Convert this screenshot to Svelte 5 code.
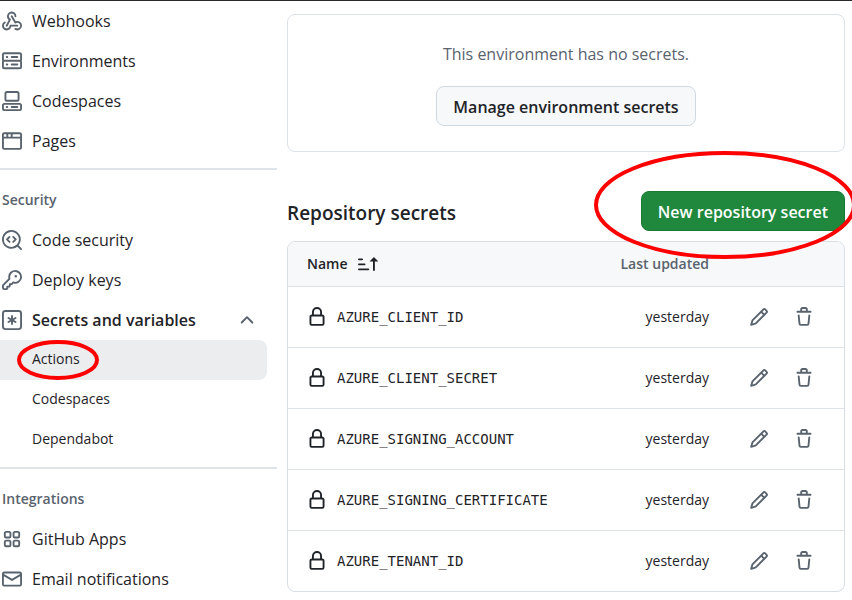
<script>
  const icons = {
    webhook: 'M5.5 4.25a2.25 2.25 0 0 1 4.5 0 .75.75 0 0 0 1.5 0 3.75 3.75 0 1 0-6.14 2.889l-2.272 4.258a.75.75 0 0 0 1.324.706L7 7.25a.75.75 0 0 0-.309-1.015A2.25 2.25 0 0 1 5.5 4.25Z M7.364 3.607a.75.75 0 0 1 1.03.257l2.608 4.349a3.75 3.75 0 1 1-.628 6.785.75.75 0 0 1 .752-1.299 2.25 2.25 0 1 0-.033-3.88.75.75 0 0 1-1.03-.256L7.107 4.636a.75.75 0 0 1 .257-1.03Z M2.9 8.776A.75.75 0 0 1 2.625 9.8 2.25 2.25 0 1 0 6 11.75a.75.75 0 0 1 .75-.751h5.5a.75.75 0 0 1 0 1.5H7.425a3.751 3.751 0 1 1-5.55-3.998.75.75 0 0 1 1.024.274Z',
    server: 'M1.75 1h12.5c.966 0 1.75.784 1.75 1.75v4c0 .372-.116.717-.314 1 .198.283.314.628.314 1v4a1.75 1.75 0 0 1-1.75 1.75H1.75A1.75 1.75 0 0 1 0 12.75v-4c0-.358.109-.707.314-1a1.739 1.739 0 0 1-.314-1v-4C0 1.784.784 1 1.75 1ZM1.5 2.75v4c0 .138.112.25.25.25h12.5a.25.25 0 0 0 .25-.25v-4a.25.25 0 0 0-.25-.25H1.75a.25.25 0 0 0-.25.25Zm.25 5.75a.25.25 0 0 0-.25.25v4c0 .138.112.25.25.25h12.5a.25.25 0 0 0 .25-.25v-4a.25.25 0 0 0-.25-.25ZM7 4.75A.75.75 0 0 1 7.75 4h4.5a.75.75 0 0 1 0 1.5h-4.5A.75.75 0 0 1 7 4.75ZM7.75 10h4.5a.75.75 0 0 1 0 1.5h-4.5a.75.75 0 0 1 0-1.5ZM3 4.75A.75.75 0 0 1 3.75 4h.5a.75.75 0 0 1 0 1.5h-.5A.75.75 0 0 1 3 4.75ZM3.75 10h.5a.75.75 0 0 1 0 1.5h-.5a.75.75 0 0 1 0-1.5Z',
    codespaces: 'M0 11.25c0-.966.784-1.75 1.75-1.75h12.5c.966 0 1.75.784 1.75 1.75v3A1.75 1.75 0 0 1 14.25 16H1.75A1.75 1.75 0 0 1 0 14.25Zm2-9.5C2 .784 2.784 0 3.75 0h8.5C13.216 0 14 .784 14 1.75v5a1.75 1.75 0 0 1-1.75 1.75h-8.5A1.75 1.75 0 0 1 2 6.75Zm1.75-.25a.25.25 0 0 0-.25.25v5c0 .138.112.25.25.25h8.5a.25.25 0 0 0 .25-.25v-5a.25.25 0 0 0-.25-.25Zm-2 9.5a.25.25 0 0 0-.25.25v3c0 .138.112.25.25.25h12.5a.25.25 0 0 0 .25-.25v-3a.25.25 0 0 0-.25-.25Z M7 12.75a.75.75 0 0 1 .75-.75h4.5a.75.75 0 0 1 0 1.5h-4.5a.75.75 0 0 1-.75-.75Zm-4 0a.75.75 0 0 1 .75-.75h.5a.75.75 0 0 1 0 1.5h-.5a.75.75 0 0 1-.75-.75Z',
    browser: 'M0 2.75C0 1.784.784 1 1.75 1h12.5c.966 0 1.75.784 1.75 1.75v10.5A1.75 1.75 0 0 1 14.25 15H1.75A1.75 1.75 0 0 1 0 13.25ZM14.5 6h-13v7.25c0 .138.112.25.25.25h12.5a.25.25 0 0 0 .25-.25Zm-6-3.5v2h6V2.75a.25.25 0 0 0-.25-.25ZM5 2.5v2h2v-2Zm-3.25 0a.25.25 0 0 0-.25.25V4.5h2v-2Z',
    codescan: 'M8.47 4.97a.75.75 0 0 0 0 1.06L9.94 7.5 8.47 8.97a.75.75 0 1 0 1.06 1.06l2-2a.75.75 0 0 0 0-1.06l-2-2a.75.75 0 0 0-1.06 0ZM6.53 6.03a.75.75 0 0 0-1.06-1.06l-2 2a.75.75 0 0 0 0 1.06l2 2a.75.75 0 1 0 1.06-1.06L5.06 7.5l1.47-1.47Z M12.246 13.307a7.501 7.501 0 1 1 1.06-1.06l2.474 2.473a.749.749 0 0 1-.326 1.275.749.749 0 0 1-.734-.215ZM1.5 7.5a6.002 6.002 0 0 0 3.608 5.504 6.002 6.002 0 0 0 6.486-1.117.748.748 0 0 1 .292-.293A6 6 0 1 0 1.5 7.5Z',
    key: 'M10.5 0a5.499 5.499 0 1 1-1.288 10.848l-.932.932a.749.749 0 0 1-.53.22H7v.75a.749.749 0 0 1-.22.53l-.5.5a.749.749 0 0 1-.53.22H5v.75a.749.749 0 0 1-.22.53l-.5.5a.749.749 0 0 1-.53.22h-2A1.75 1.75 0 0 1 0 14.25v-2c0-.199.079-.389.22-.53l4.932-4.932A5.5 5.5 0 0 1 10.5 0Zm-4 5.5c-.001.431.069.86.205 1.269a.75.75 0 0 1-.181.768L1.5 12.56v1.69c0 .138.112.25.25.25h1.69l.06-.06v-1.19a.75.75 0 0 1 .75-.75h1.19l.06-.06v-1.19a.75.75 0 0 1 .75-.75h1.19l1.023-1.025a.75.75 0 0 1 .768-.18A4 4 0 1 0 6.5 5.5ZM11 6a1 1 0 1 1 0-2 1 1 0 0 1 0 2Z',
    asterisk: 'M0 2.75A2.75 2.75 0 0 1 2.75 0h10.5A2.75 2.75 0 0 1 16 2.75v10.5A2.75 2.75 0 0 1 13.25 16H2.75A2.75 2.75 0 0 1 0 13.25ZM2.75 1.5c-.69 0-1.25.56-1.25 1.25v10.5c0 .69.56 1.25 1.25 1.25h10.5c.69 0 1.25-.56 1.25-1.25V2.75c0-.69-.56-1.25-1.25-1.25Z M8 4a.75.75 0 0 1 .75.75V6.7l1.69-.975a.75.75 0 0 1 .75 1.3L9.5 8l1.69.976a.75.75 0 0 1-.75 1.298L8.75 9.3v1.951a.75.75 0 0 1-1.5 0V9.299l-1.69.976a.75.75 0 0 1-.75-1.3L6.5 8l-1.69-.975a.75.75 0 0 1 .75-1.3l1.69.976V4.75A.75.75 0 0 1 8 4Z',
    apps: 'M1.5 3.25c0-.966.784-1.75 1.75-1.75h2.5c.966 0 1.75.784 1.75 1.75v2.5A1.75 1.75 0 0 1 5.75 7.5h-2.5A1.75 1.75 0 0 1 1.5 5.75Zm7 0c0-.966.784-1.75 1.75-1.75h2.5c.966 0 1.75.784 1.75 1.75v2.5a1.75 1.75 0 0 1-1.75 1.75h-2.5A1.75 1.75 0 0 1 8.5 5.75Zm-7 7c0-.966.784-1.75 1.75-1.75h2.5c.966 0 1.75.784 1.75 1.75v2.5a1.75 1.75 0 0 1-1.75 1.75h-2.5a1.75 1.75 0 0 1-1.75-1.75Zm7 0c0-.966.784-1.75 1.75-1.75h2.5c.966 0 1.75.784 1.75 1.75v2.5a1.75 1.75 0 0 1-1.75 1.75h-2.5a1.75 1.75 0 0 1-1.75-1.75ZM3.25 3a.25.25 0 0 0-.25.25v2.5c0 .138.112.25.25.25h2.5A.25.25 0 0 0 6 5.75v-2.5A.25.25 0 0 0 5.75 3Zm7 0a.25.25 0 0 0-.25.25v2.5c0 .138.112.25.25.25h2.5a.25.25 0 0 0 .25-.25v-2.5a.25.25 0 0 0-.25-.25Zm-7 7a.25.25 0 0 0-.25.25v2.5c0 .138.112.25.25.25h2.5a.25.25 0 0 0 .25-.25v-2.5a.25.25 0 0 0-.25-.25Zm7 0a.25.25 0 0 0-.25.25v2.5c0 .138.112.25.25.25h2.5a.25.25 0 0 0 .25-.25v-2.5a.25.25 0 0 0-.25-.25Z',
    mail: 'M1.75 2h12.5c.966 0 1.75.784 1.75 1.75v8.5A1.75 1.75 0 0 1 14.25 14H1.75A1.75 1.75 0 0 1 0 12.25v-8.5C0 2.784.784 2 1.75 2ZM1.5 12.251c0 .138.112.25.25.25h12.5a.25.25 0 0 0 .25-.25V5.809L8.38 9.397a.75.75 0 0 1-.76 0L1.5 5.809v6.442Zm13-8.181v-.32a.25.25 0 0 0-.25-.25H1.75a.25.25 0 0 0-.25.25v.32L8 7.88Z',
    lock: 'M4 4a4 4 0 0 1 8 0v2h.25c.966 0 1.75.784 1.75 1.75v5.5A1.75 1.75 0 0 1 12.25 15h-8.5A1.75 1.75 0 0 1 2 13.25v-5.5C2 6.784 2.784 6 3.75 6H4Zm8.25 3.5h-8.5a.25.25 0 0 0-.25.25v5.5c0 .138.112.25.25.25h8.5a.25.25 0 0 0 .25-.25v-5.5a.25.25 0 0 0-.25-.25ZM10.5 6V4a2.5 2.5 0 1 0-5 0v2Z',
    pencil: 'M11.013 1.427a1.75 1.75 0 0 1 2.474 0l1.086 1.086a1.75 1.75 0 0 1 0 2.474l-8.61 8.61c-.21.21-.47.364-.756.445l-3.251.93a.75.75 0 0 1-.927-.928l.929-3.25c.081-.286.235-.547.445-.758l8.61-8.61Zm.176 4.823L9.75 4.81l-6.286 6.287a.253.253 0 0 0-.064.108l-.558 1.953 1.953-.558a.253.253 0 0 0 .108-.064Zm1.238-3.763a.25.25 0 0 0-.354 0L10.811 3.75l1.439 1.44 1.263-1.263a.25.25 0 0 0 0-.354Z',
    trash: 'M11 1.75V3h2.25a.75.75 0 0 1 0 1.5H2.75a.75.75 0 0 1 0-1.5H5V1.75C5 .784 5.784 0 6.75 0h2.5C10.216 0 11 .784 11 1.75ZM4.496 6.675l.66 6.6a.25.25 0 0 0 .249.225h5.19a.25.25 0 0 0 .249-.225l.66-6.6a.75.75 0 0 1 1.492.149l-.66 6.6A1.748 1.748 0 0 1 10.595 15h-5.19a1.75 1.75 0 0 1-1.741-1.575l-.66-6.6a.75.75 0 1 1 1.492-.15ZM6.5 1.75V3h3V1.75a.25.25 0 0 0-.25-.25h-2.5a.25.25 0 0 0-.25.25Z',
    sort: 'm12.927 2.573 3 3A.25.25 0 0 1 15.75 6H13.5v6.75a.75.75 0 0 1-1.5 0V6H9.75a.25.25 0 0 1-.177-.427l3-3a.25.25 0 0 1 .354 0ZM0 12.25a.75.75 0 0 1 .75-.75h7.5a.75.75 0 0 1 0 1.5H.75a.75.75 0 0 1-.75-.75Zm0-4a.75.75 0 0 1 .75-.75h4.5a.75.75 0 0 1 0 1.5H.75A.75.75 0 0 1 0 8.25Zm0-4a.75.75 0 0 1 .75-.75h2.5a.75.75 0 0 1 0 1.5H.75A.75.75 0 0 1 0 4.25Z',
    chevron: 'M3.22 10.53a.749.749 0 0 1 0-1.06l4.25-4.25a.749.749 0 0 1 1.06 0l4.25 4.25a.749.749 0 1 1-1.06 1.06L8 6.811 4.28 10.53a.749.749 0 0 1-1.06 0Z'
  };

  const general = [
    { icon: 'webhook', label: 'Webhooks' },
    { icon: 'server', label: 'Environments' },
    { icon: 'codespaces', label: 'Codespaces' },
    { icon: 'browser', label: 'Pages' }
  ];
  const security = [
    { icon: 'codescan', label: 'Code security' },
    { icon: 'key', label: 'Deploy keys' }
  ];
  const integrations = [
    { icon: 'apps', label: 'GitHub Apps' },
    { icon: 'mail', label: 'Email notifications' }
  ];
  const scopes = ['Actions', 'Codespaces', 'Dependabot'];
  const secrets = [
    'AZURE_CLIENT_ID',
    'AZURE_CLIENT_SECRET',
    'AZURE_SIGNING_ACCOUNT',
    'AZURE_SIGNING_CERTIFICATE',
    'AZURE_TENANT_ID'
  ];

  let expanded = $state(true);
  let current = $state('Actions');
</script>

{#snippet icon(name)}
  <svg class="icon" viewBox="0 0 16 16" aria-hidden="true"><path d={icons[name]} /></svg>
{/snippet}

{#snippet links(items)}
  {#each items as item}
    <li><a class="item" href="#{item.icon}">{@render icon(item.icon)}<span>{item.label}</span></a></li>
  {/each}
{/snippet}

<div class="page">
  <nav class="sidebar" aria-label="Repository settings">
    <ul>{@render links(general)}</ul>
    <hr />
    <h3>Security</h3>
    <ul>
      {@render links(security)}
      <li>
        <button class="item parent" aria-expanded={expanded} onclick={() => (expanded = !expanded)}>
          {@render icon('asterisk')}<span>Secrets and variables</span>
          <span class="chevron" class:closed={!expanded}>{@render icon('chevron')}</span>
        </button>
        {#if expanded}
          <ul>
            {#each scopes as scope}
              <li class="scope">
                <a
                  class="sub"
                  class:current={scope === current}
                  href="#secrets-{scope}"
                  aria-current={scope === current ? 'page' : undefined}
                  onclick={() => (current = scope)}>{scope}</a>
                {#if scope === 'Actions'}
                  <svg class="ring ring-small" viewBox="0 0 82 40" aria-hidden="true">
                    <ellipse cx="41" cy="20" rx="39" ry="18" />
                  </svg>
                {/if}
              </li>
            {/each}
          </ul>
        {/if}
      </li>
    </ul>
    <hr />
    <h3>Integrations</h3>
    <ul>{@render links(integrations)}</ul>
  </nav>

  <main>
    <section class="blank">
      <p>This environment has no secrets.</p>
      <button class="btn">Manage environment secrets</button>
    </section>

    <header>
      <h2>Repository secrets</h2>
      <div class="marked">
        <button class="btn primary">New repository secret</button>
        <svg class="ring ring-large" viewBox="0 0 262 108" aria-hidden="true">
          <ellipse cx="131" cy="54" rx="129" ry="52" />
        </svg>
      </div>
    </header>

    <table>
      <thead>
        <tr>
          <th class="name"><button class="sort">Name {@render icon('sort')}</button></th>
          <th class="date">Last updated</th>
          <th class="actions" aria-label="Actions"></th>
        </tr>
      </thead>
      <tbody>
        {#each secrets as secret}
          <tr>
            <td class="name"><div class="secret">{@render icon('lock')}<code>{secret}</code></div></td>
            <td class="date">yesterday</td>
            <td class="actions">
              <div class="tools">
                <button class="tool" aria-label="Edit {secret}">{@render icon('pencil')}</button>
                <button class="tool" aria-label="Remove {secret}">{@render icon('trash')}</button>
              </div>
            </td>
          </tr>
        {/each}
      </tbody>
    </table>
  </main>
</div>

<style>
  :global(body) {
    margin: 0;
    background: #fff;
  }
  .page {
    display: flex;
    overflow: hidden;
    border-top: 1px solid #2a2a2a;
    font-family: 'Segoe UI', 'Open Sans', 'Noto Sans', sans-serif;
    font-size: 16px;
    line-height: 24px;
    color: #1f2328;
  }
  ul {
    list-style: none;
    margin: 0;
    padding: 0;
  }
  button {
    font: inherit;
    color: inherit;
    cursor: pointer;
  }
  .icon {
    display: block;
    flex: none;
    width: 20px;
    height: 20px;
    fill: currentColor;
  }

  .sidebar {
    flex: none;
    width: 277px;
  }
  .item {
    display: flex;
    align-items: center;
    gap: 10px;
    box-sizing: border-box;
    width: 267px;
    height: 40px;
    padding: 0 10px 0 2px;
    border: 0;
    background: none;
    color: #1f2328;
    text-align: left;
    text-decoration: none;
  }
  .item .icon {
    color: #59636e;
  }
  .parent {
    font-weight: 600;
  }
  .chevron {
    margin-left: auto;
  }
  .closed {
    transform: rotate(180deg);
  }
  .scope {
    position: relative;
  }
  .sub {
    display: block;
    width: 235px;
    padding: 7px 0 9px 32px;
    border-radius: 0 8px 8px 0;
    color: #1f2328;
    font-size: 14px;
    text-decoration: none;
  }
  .current {
    background: #ecedef;
  }
  hr {
    height: 2px;
    margin: 7px 0 0;
    border: 0;
    background: #dfe4e8;
  }
  h3 {
    margin: 0;
    padding: 18px 2px 8px;
    color: #59636e;
    font-size: 14px;
    font-weight: 600;
  }

  main {
    flex: 1;
    min-width: 0;
    padding: 13px 7px 8px 10px;
  }
  .blank {
    display: flex;
    flex-direction: column;
    align-items: center;
    gap: 20px;
    padding: 27px 16px 25px;
    border: 1px solid #dce2e8;
    border-radius: 8px;
  }
  .blank p {
    margin: 0;
    color: #59636e;
  }
  .btn {
    height: 40px;
    padding: 2px 16px 0;
    border: 1px solid #d1d9e0;
    border-radius: 8px;
    background: #f6f8fa;
    font-weight: 600;
  }
  .primary {
    border-color: #1a7a34;
    background: #1f883d;
    color: #fff;
  }
  header {
    display: flex;
    align-items: center;
    justify-content: space-between;
    margin: 39px 0 10px;
  }
  h2 {
    margin: 0;
    padding-top: 4px;
    font-size: 19px;
    font-weight: 600;
  }
  .marked {
    position: relative;
  }

  .ring {
    position: absolute;
    z-index: 1;
    fill: none;
    stroke: #f00;
    stroke-width: 4px;
    pointer-events: none;
  }
  .ring-small {
    top: 0;
    left: 17px;
    width: 82px;
    height: 40px;
  }
  .ring-large {
    top: -40px;
    right: -11px;
    width: 262px;
    height: 108px;
  }

  table {
    width: 100%;
    border: 1px solid #d8dee4;
    border-radius: 8px;
    border-spacing: 0;
    overflow: hidden;
    font-size: 14px;
  }
  th,
  td {
    height: 60px;
    padding: 0;
    border-bottom: 1px solid #dce2e8;
  }
  th {
    height: 44px;
    background: #f6f8fa;
    font-weight: 600;
    color: #59636e;
  }
  tbody tr:last-child td {
    border-bottom: 0;
  }
  .name {
    padding-left: 19px;
    text-align: left;
  }
  .date {
    width: 100px;
    text-align: right;
  }
  .actions {
    width: 135px;
  }
  .sort {
    display: flex;
    align-items: center;
    gap: 10px;
    padding: 0;
    border: 0;
    background: none;
    color: #1f2328;
  }
  .secret {
    display: flex;
    align-items: center;
    gap: 10px;
  }
  code {
    font-family: Consolas, 'DejaVu Sans Mono', monospace;
    font-size: 14px;
  }
  .tools {
    display: flex;
    gap: 25px;
    padding-left: 40px;
  }
  .tool {
    padding: 0;
    border: 0;
    background: none;
    color: #59636e;
  }
</style>
